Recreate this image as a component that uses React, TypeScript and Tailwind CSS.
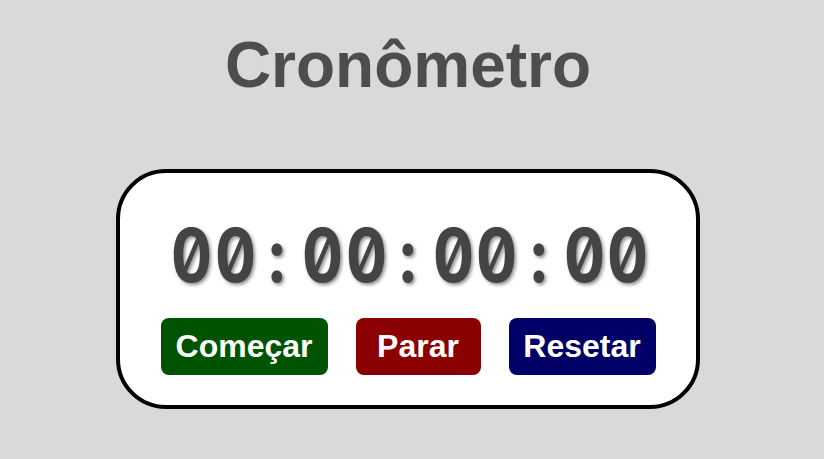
const display = "00:00:00:00".split("");

export default function App() {
    return (
        <div className="min-h-[459px] w-full bg-[#d9d9d9] pr-2 font-['Liberation_Sans',Arial,sans-serif] leading-[normal]">
            <h1 className="pt-[28px] text-center text-[64px] leading-[normal] font-bold text-[#4d4d4d]">Cronômetro</h1>
            <div className="mx-auto mt-[67px] w-[584px] rounded-[50px] border-4 border-black bg-white pt-[40px] pb-[30px]">
                {/* relógio: cada caractere numa casa fixa, como numa fonte mono */}
                <div className="flex justify-center font-['Inter',sans-serif] text-[74px] leading-[84px] font-bold text-[#444444] slashed-zero tabular-nums [text-shadow:2px_2px_4px_rgba(0,0,0,0.45)]">
                    {display.map((c, i) => (
                        <span key={i} className="inline-block w-[43.6px] scale-x-[0.86] text-center">{c}</span>
                    ))}
                </div>
                <div className="mt-[21px] flex justify-center gap-[28px]">
                    <button className="w-[167px] rounded-lg bg-[#005300] py-[10px] text-[32px] leading-[normal] font-bold text-white">Começar</button>
                    <button className="w-[125px] rounded-lg bg-[#8b0000] py-[10px] text-[32px] leading-[normal] font-bold text-white">Parar</button>
                    <button className="w-[147px] rounded-lg bg-[#000066] py-[10px] text-[32px] leading-[normal] font-bold text-white">Resetar</button>
                </div>
            </div>
        </div>
    )
}
